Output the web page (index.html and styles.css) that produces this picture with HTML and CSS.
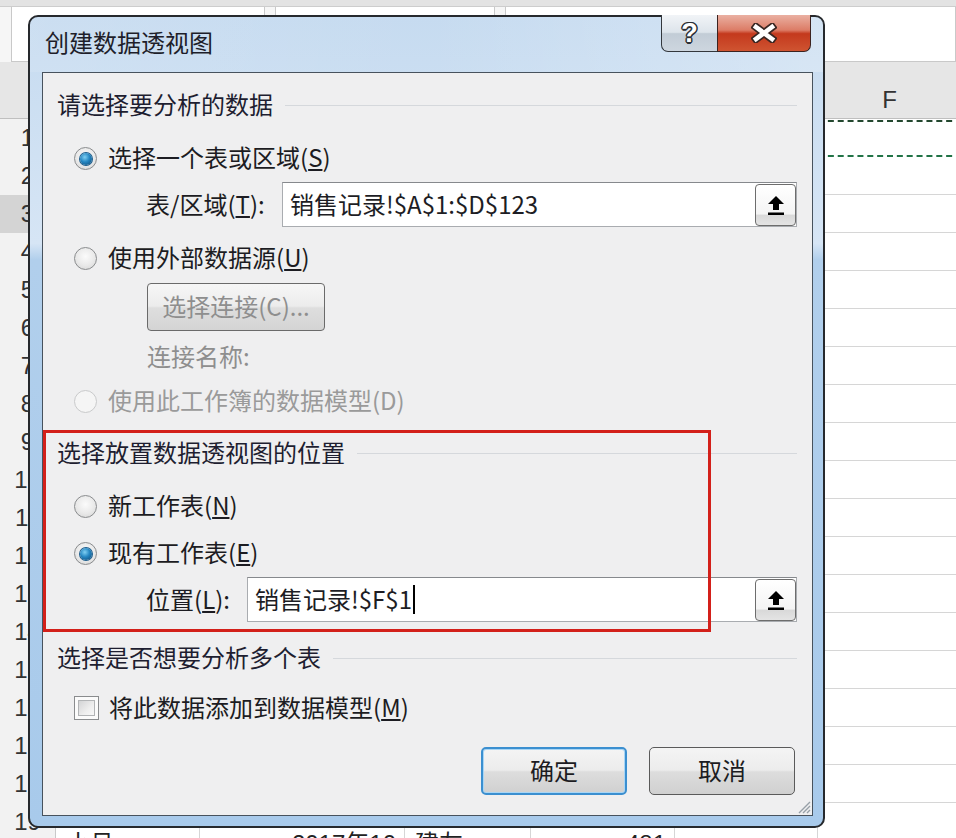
FILE: index.html
```html
<!DOCTYPE html>
<html lang="zh-CN">
<head>
  <meta charset="UTF-8">
  <meta name="viewport" content="width=device-width, initial-scale=1.0">
  <title>创建数据透视图</title>
  <link rel="stylesheet" href="styles.css">
</head>
<body>
  <!-- worksheet behind the dialog -->
  <div class="sheet">
    <div class="ribbon-edge"></div>
    <div class="formula-bar">
      <div class="name-box"></div>
      <div class="fx-area"></div>
      <div class="formula-input"></div>
    </div>
    <div class="row col-heads">
      <div class="corner"></div>
      <div class="col-head"></div>
      <div class="col-head"></div>
      <div class="col-head"></div>
      <div class="col-head"></div>
      <div class="col-head"></div>
      <div class="col-head">F</div>
    </div>
    <div class="row row-copied"><div class="row-num">1</div><div class="cell"></div><div class="cell"></div><div class="cell"></div><div class="cell"></div><div class="cell"></div><div class="cell"></div></div>
    <div class="row"><div class="row-num">2</div></div>
    <div class="row"><div class="row-num active">3</div></div>
    <div class="row"><div class="row-num">4</div></div>
    <div class="row"><div class="row-num">5</div></div>
    <div class="row"><div class="row-num">6</div></div>
    <div class="row"><div class="row-num">7</div></div>
    <div class="row"><div class="row-num">8</div></div>
    <div class="row"><div class="row-num">9</div></div>
    <div class="row"><div class="row-num">10</div></div>
    <div class="row"><div class="row-num">11</div></div>
    <div class="row"><div class="row-num">12</div></div>
    <div class="row"><div class="row-num">13</div></div>
    <div class="row"><div class="row-num">14</div></div>
    <div class="row"><div class="row-num">15</div></div>
    <div class="row"><div class="row-num">16</div></div>
    <div class="row"><div class="row-num">17</div></div>
    <div class="row"><div class="row-num">18</div></div>
    <div class="row last-row">
      <div class="row-num">19</div>
      <div class="cell">小吕</div>
      <div class="cell num">2017年10</div>
      <div class="cell">建友</div>
      <div class="cell num">481</div>
      <div class="cell"></div>
      <div class="cell"></div>
    </div>
  </div>

  <!-- Create PivotChart dialog -->
  <div class="dialog">
    <div class="titlebar">
      <span class="title">创建数据透视图</span>
      <div class="caption-btns">
        <div class="cap-btn help"><span class="help-glyph">?</span></div>
        <div class="cap-btn close">
          <svg width="26" height="20" viewBox="0 0 26 20">
            <path d="M5 4 L21 16 M21 4 L5 16" stroke="#3a2622" stroke-width="8" stroke-linecap="square" fill="none"/>
            <path d="M5 4 L21 16 M21 4 L5 16" stroke="#fff" stroke-width="4.6" stroke-linecap="square" fill="none"/>
          </svg>
        </div>
      </div>
    </div>

    <div class="client">
      <div class="group-head">请选择要分析的数据</div>

      <div class="option first-option"><span class="radio checked"></span>选择一个表或区域(<u>S</u>)</div>

      <div class="field">
        <span class="field-label range-label">表/区域(<u>T</u>):</span>
        <div class="input">
          <span class="input-text">销售记录!$A$1:$D$123</span>
          <span class="ref-btn">
            <svg width="20" height="22" viewBox="0 0 20 22"><path d="M10 2 L18 10 H13 V16 H7 V10 H2 Z" fill="#000"/><rect x="2" y="18.5" width="16" height="2.5" fill="#000"/></svg>
          </span>
        </div>
      </div>

      <div class="option after-field"><span class="radio"></span>使用外部数据源(<u>U</u>)</div>

      <button class="conn-btn" disabled>选择连接(C)...</button>

      <div class="conn-name">连接名称:</div>

      <div class="option disabled after-name"><span class="radio"></span>使用此工作簿的数据模型(D)</div>

      <div class="group-head section-gap">选择放置数据透视图的位置</div>

      <div class="option first-option"><span class="radio"></span>新工作表(<u>N</u>)</div>

      <div class="option second-option"><span class="radio checked"></span>现有工作表(<u>E</u>)</div>

      <div class="field">
        <span class="field-label place-label">位置(<u>L</u>):</span>
        <div class="input">
          <span class="input-text">销售记录!$F$1</span><span class="caret"></span>
          <span class="ref-btn">
            <svg width="20" height="22" viewBox="0 0 20 22"><path d="M10 2 L18 10 H13 V16 H7 V10 H2 Z" fill="#000"/><rect x="2" y="18.5" width="16" height="2.5" fill="#000"/></svg>
          </span>
        </div>
      </div>

      <div class="group-head tables-head">选择是否想要分析多个表</div>

      <div class="option check-option"><span class="checkbox"><span></span></span>将此数据添加到数据模型(<u>M</u>)</div>

      <div class="actions">
        <button class="btn default">确定</button>
        <button class="btn">取消</button>
      </div>

      <div class="highlight"></div>

      <svg class="grip" width="16" height="16" viewBox="0 0 16 16">
        <path d="M15 4 L4 15 M15 8 L8 15 M15 12 L12 15" stroke="#97a0a8" stroke-width="1.4"/>
      </svg>
    </div>
  </div>
</body>
</html>
```

FILE: styles.css
```css
* {
  box-sizing: border-box;
}

body {
  margin: 0;
  width: 956px;
  height: 838px;
  overflow: hidden;
  position: relative;
  background: #fff;
}

/* ---------- worksheet ---------- */

.sheet {
  font-family: "Liberation Sans", "Noto Sans CJK SC", sans-serif;
  font-size: 24px;
  color: #222;
}

.ribbon-edge {
  height: 7px;
  background: #e3e3e3;
  border-bottom: 1px solid #cdcdcd;
}

.formula-bar {
  height: 55px;
  display: flex;
  gap: 10px;
  padding-left: 11px;
  background: #f6f6f6;
}

.formula-bar > div {
  background: #fff;
  border: 1px solid #c9c9c9;
  border-top: none;
}

.name-box {
  width: 254px;
}

.fx-area {
  width: 220px;
}

.formula-input {
  flex: 1;
}

.row {
  display: grid;
  grid-template-columns: 56px 144px 205px 126px 144px 143px 144px;
  height: 38px;
  border-bottom: 1px solid #d6d6d6;
}

.col-heads {
  height: 57px;
  background: #e6e6e6;
  border-bottom: 1px solid #bfbfbf;
}

.col-head {
  display: flex;
  align-items: center;
  justify-content: center;
  padding-top: 20px;
  border-right: 1px solid #cfcfcf;
  color: #333;
}

.row-num {
  background: #f2f2f2;
  border-right: 1px solid #c9c9c9;
  text-align: center;
  line-height: 38px;
  color: #333;
}

.row-num.active {
  background: #d4d4d4;
}

.cell {
  border-right: 1px solid #d6d6d6;
  display: flex;
  align-items: flex-end;
  padding: 0 8px 0 10px;
  line-height: 30px;
}

.last-row .cell {
  margin-bottom: -18px;
}

.cell.num {
  justify-content: flex-end;
}

.row-copied {
  border-bottom: none;
}

.row-copied .cell {
  border-right: none;
  border-top: 2px dashed #23482f;
  border-bottom: 2px dashed #217346;
  margin: 1px 0 0;
}

/* ---------- dialog window ---------- */

.dialog {
  position: absolute;
  left: 28px;
  top: 15px;
  width: 797px;
  height: 813px;
  border: 2px solid #26292d;
  border-radius: 10px;
  background: linear-gradient(180deg, #c6dbf0 0%, #d6e5f5 28%, #b1cfec 30%, #a8caeb 100%);
  display: flex;
  flex-direction: column;
  font-family: "Noto Sans CJK SC", "Noto Sans", sans-serif;
  font-size: 24px;
  color: #1c1c22;
}

.titlebar {
  height: 55px;
  display: flex;
  align-items: flex-start;
  background: linear-gradient(90deg, rgba(255, 255, 255, 0.1) 0%, rgba(255, 255, 255, 0) 50%, rgba(255, 255, 255, 0.25) 100%);
  border-radius: 8px 8px 0 0;
}

.title {
  margin-left: 15px;
  padding-top: 10px;
  line-height: 30px;
  color: #1e1e2a;
}

.caption-btns {
  display: flex;
  margin: -2px 12px 0 auto;
  height: 37px;
}

.cap-btn {
  display: flex;
  align-items: center;
  justify-content: center;
  border: 1px solid #33373c;
  border-top: none;
}

.help {
  width: 56px;
  border-radius: 0 0 0 7px;
  border-right: none;
  background: linear-gradient(180deg, #f1f4f7 0%, #dde4eb 48%, #c2ccd6 52%, #cdd6df 100%);
}

.help-glyph {
  font-family: "Liberation Sans", sans-serif;
  font-weight: bold;
  font-size: 27px;
  color: #fff;
  text-shadow: -1.5px 0 #2c3036, 1.5px 0 #2c3036, 0 -1.5px #2c3036, 0 1.5px #2c3036,
    -1px -1px #2c3036, 1px 1px #2c3036, -1px 1px #2c3036, 1px -1px #2c3036;
}

.close {
  width: 94px;
  border-radius: 0 0 7px 0;
  border-color: #3b2320;
  background: linear-gradient(180deg, #eab0a2 0%, #dc7c66 42%, #c4391d 52%, #cf5431 100%);
}

.client {
  flex: 1;
  margin: 0 10px 10px 12px;
  border: 1px solid #47525d;
  background: #efeff0;
  padding: 17px 15px 0 0;
  display: flex;
  flex-direction: column;
  position: relative;
}

.group-head {
  display: flex;
  align-items: center;
  height: 30px;
  padding: 0 0 3px 14px;
  color: #1e1e30;
}

.group-head::after {
  content: "";
  flex: 1;
  height: 1px;
  margin: 3px 0 0 12px;
  background: #d5d8dc;
}

.section-gap {
  margin-top: 23px;
}

.tables-head {
  margin-top: 21px;
}

.option {
  display: flex;
  align-items: center;
  height: 30px;
  padding-left: 31px;
  line-height: 26px;
}

.first-option {
  margin-top: 22px;
}

.second-option {
  margin-top: 17px;
}

.after-field {
  margin-top: 15px;
}

.after-name {
  margin-top: 12px;
}

.check-option {
  margin-top: 19px;
}

.option.disabled {
  color: #9a9a9a;
}

.radio {
  width: 23px;
  height: 23px;
  margin: 3px 11px 0 0;
  border-radius: 50%;
  border: 1px solid #8a8c8e;
  background: radial-gradient(circle at 50% 40%, #fbfbfb 0%, #e9e9e9 55%, #d2d2d2 100%);
  display: flex;
  align-items: center;
  justify-content: center;
}

.radio.checked::after {
  content: "";
  width: 12px;
  height: 12px;
  border-radius: 50%;
  background: radial-gradient(circle at 40% 35%, #7fcff2 0%, #2486c2 45%, #0c4572 100%);
  box-shadow: 0 0 0 1px #1a5c8c;
}

.option.disabled .radio {
  border-color: #c9cacb;
  background: #f5f5f5;
}

.checkbox {
  width: 25px;
  height: 24px;
  margin: 2px 10px 0 0;
  border: 1px solid #8a8c8e;
  background: #fbfbfb;
  padding: 3px;
}

.checkbox span {
  display: block;
  width: 100%;
  height: 100%;
  border: 1px solid #b2b4b6;
  background: linear-gradient(135deg, #d3d4d5 0%, #eeeeee 60%, #f8f8f8 100%);
}

.field {
  display: flex;
  align-items: center;
  height: 45px;
  margin-top: 10px;
  padding-left: 103px;
}

.field-label {
  margin-bottom: 3px;
}

.range-label {
  width: 136px;
}

.place-label {
  width: 101px;
}

.input {
  flex: 1;
  height: 45px;
  display: flex;
  align-items: center;
  padding-left: 7px;
  background: #fff;
  border: 1px solid #a9acb0;
  border-top-color: #86898d;
  color: #1d1d24;
}

.input-text {
  margin-bottom: 3px;
}

.caret {
  width: 2px;
  height: 29px;
  margin-left: 1px;
  background: #000;
}

.ref-btn {
  margin-left: auto;
  width: 41px;
  height: 42px;
  border: 1px solid #6d6d6d;
  border-radius: 4px;
  background: linear-gradient(180deg, #ffffff 0%, #f4f4f4 72%, #d9d9d9 76%, #e4e4e4 100%);
  display: flex;
  align-items: center;
  justify-content: center;
}

.conn-btn {
  width: 178px;
  height: 48px;
  margin: 11px 0 0 104px;
  padding: 0 0 3px;
  border: 1px solid #6a6a6a;
  border-radius: 4px;
  background: linear-gradient(180deg, #f6f6f6 0%, #ececec 48%, #dedede 52%, #d4d4d4 100%);
  font-family: inherit;
  font-size: 24px;
  color: #8e8e8e;
}

.conn-name {
  height: 30px;
  line-height: 26px;
  margin-top: 12px;
  padding-left: 104px;
  color: #8e8e8e;
}

.actions {
  display: flex;
  justify-content: flex-end;
  gap: 22px;
  margin-top: 25px;
  padding-right: 2px;
}

.btn {
  width: 146px;
  height: 48px;
  padding: 0 0 3px;
  border: 1px solid #5a5a5a;
  border-radius: 5px;
  background: linear-gradient(180deg, #f4f4f4 0%, #ececec 48%, #dddddd 52%, #d0d0d0 100%);
  font-family: inherit;
  font-size: 24px;
  color: #1c1c22;
}

.btn.default {
  border: 2px solid #3b8fd0;
  box-shadow: inset 0 0 0 1px #a9d6f5;
}

/* red annotation frame drawn over the screenshot */
.highlight {
  position: absolute;
  left: 0;
  top: 357px;
  width: 668px;
  height: 202px;
  border: 3px solid #d3201a;
  pointer-events: none;
}

.grip {
  position: absolute;
  right: 1px;
  bottom: 1px;
}
```
